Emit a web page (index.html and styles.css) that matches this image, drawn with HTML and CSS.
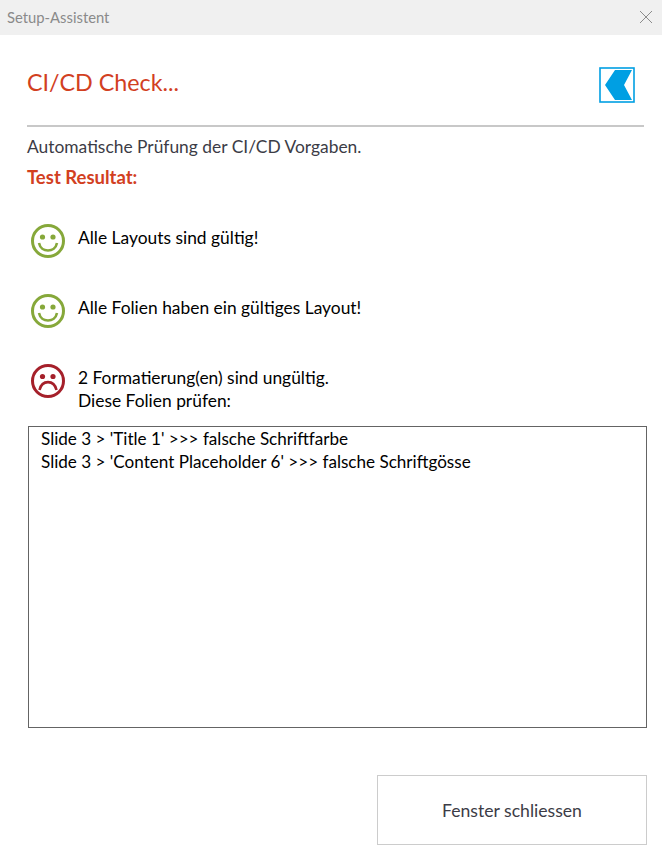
FILE: index.html
```html
<!DOCTYPE html>
<html lang="de">
<head>
    <meta charset="UTF-8">
    <title>Setup-Assistent</title>
    <link rel="stylesheet" href="styles.css">
</head>
<body>

    <!-- Title bar -->
    <div class="titlebar">
        <span class="titlebar-text">Setup-Assistent</span>
        <svg class="close-icon" width="14" height="14" viewBox="0 0 14 14">
            <path d="M1 1L13 13M13 1L1 13" stroke="#8c8c8c" stroke-width="1" fill="none"/>
        </svg>
    </div>

    <div class="content">
        <!-- Header -->
        <div class="header">
            <h1>CI/CD Check...</h1>
            <svg class="logo" width="36" height="36" viewBox="0 0 36 36">
                <rect x="1" y="1" width="34" height="34" fill="#fff" stroke="#009fe3" stroke-width="1.6"/>
                <path d="M33 3H16L6 18L16 33H33L25 18Z" fill="#009fe3"/>
            </svg>
        </div>

        <p class="intro">Automatische Prüfung der CI/CD Vorgaben.</p>
        <p class="result-label">Test Resultat:</p>

        <!-- Checks -->
        <div class="check check-first">
            <svg class="face" width="36" height="36" viewBox="0 0 36 36">
                <circle cx="18" cy="18" r="15.5" fill="none" stroke="#86a83a" stroke-width="3"/>
                <circle cx="12.5" cy="14" r="2.6" fill="#86a83a"/>
                <circle cx="23" cy="14" r="2.6" fill="#86a83a"/>
                <path d="M9 20C11 30 25 30 27 20" fill="none" stroke="#86a83a" stroke-width="2.6"/>
            </svg>
            <div class="check-text">Alle Layouts sind gültig!</div>
        </div>

        <div class="check">
            <svg class="face" width="36" height="36" viewBox="0 0 36 36">
                <circle cx="18" cy="18" r="15.5" fill="none" stroke="#86a83a" stroke-width="3"/>
                <circle cx="12.5" cy="14" r="2.6" fill="#86a83a"/>
                <circle cx="23" cy="14" r="2.6" fill="#86a83a"/>
                <path d="M9 20C11 30 25 30 27 20" fill="none" stroke="#86a83a" stroke-width="2.6"/>
            </svg>
            <div class="check-text">Alle Folien haben ein gültiges Layout!</div>
        </div>

        <div class="check">
            <svg class="face" width="36" height="36" viewBox="0 0 36 36">
                <circle cx="18" cy="18" r="15.5" fill="none" stroke="#a5202a" stroke-width="3"/>
                <circle cx="12.5" cy="13.5" r="2.6" fill="#a5202a"/>
                <circle cx="23" cy="13.5" r="2.6" fill="#a5202a"/>
                <path d="M9.5 27C12 16.5 24 16.5 26.5 27" fill="none" stroke="#a5202a" stroke-width="2.6"/>
            </svg>
            <div class="check-text">2 Formatierung(en) sind ungültig.<br>Diese Folien prüfen:</div>
        </div>

        <!-- Result list -->
        <div class="result-box">
            <div>Slide 3 &gt; 'Title 1' &gt;&gt;&gt; falsche Schriftfarbe</div>
            <div>Slide 3 &gt; 'Content Placeholder 6' &gt;&gt;&gt; falsche Schriftgösse</div>
        </div>

        <div class="footer">
            <button class="close-button">Fenster schliessen</button>
        </div>
    </div>

</body>
</html>
```

FILE: styles.css
```css
* {
    margin: 0;
    padding: 0;
    box-sizing: border-box;
}

body {
    background: #fff;
    font-family: 'Lato', 'Open Sans', sans-serif;
    color: #000;
    height: 863px;
    overflow: hidden;
}

.titlebar {
    height: 35px;
    background: #f0f0f0;
    display: flex;
    align-items: center;
    justify-content: space-between;
    padding: 0 9px 2px 7px;
}

.titlebar-text {
    font-size: 14.8px;
    color: #8a8a8a;
}

.content {
    padding: 31px 15px 0 27px;
}

.header {
    height: 61px;
    margin-right: 3px;
    display: flex;
    justify-content: space-between;
    align-items: flex-start;
    padding-right: 9px;
    border-bottom: 2px solid #c8c8c8;
}

.header h1 {
    font-size: 23.3px;
    font-weight: 400;
    color: #d2401f;
    line-height: 32px;
}

.logo {
    display: block;
    margin-top: 1px;
}

.intro {
    font-size: 17.4px;
    line-height: 22px;
    color: #3c3c46;
    margin-top: 9px;
}

.result-label {
    font-size: 18.5px;
    line-height: 22px;
    font-weight: 700;
    color: #d2401f;
    margin-top: 8px;
}

.check {
    display: flex;
    gap: 12px;
    margin-top: 34px;
    margin-left: 3px;
}

.check-first {
    margin-top: 35px;
}

.face {
    flex: none;
    display: block;
}

.check-text {
    font-size: 17.4px;
    line-height: 23px;
    margin-top: 3px;
}

.result-box {
    width: 619px;
    height: 302px;
    margin: 14px 0 0 1px;
    border: 1px solid #646464;
    padding: 0 12px;
    font-size: 17.1px;
    line-height: 23px;
}

.footer {
    display: flex;
    justify-content: flex-end;
    margin-top: 47px;
}

.close-button {
    width: 270px;
    height: 70px;
    background: #fff;
    border: 1px solid #ccc;
    font-family: inherit;
    font-size: 17.6px;
    color: #3c3c46;
}
```
